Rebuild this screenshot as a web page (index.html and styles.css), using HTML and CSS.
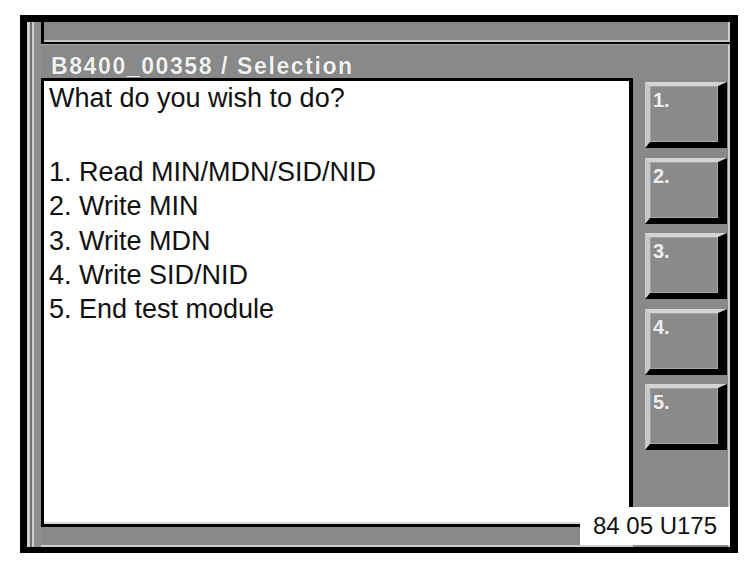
FILE: index.html
```html
<!DOCTYPE html>
<html>
<head>
<meta charset="utf-8">
<link rel="stylesheet" href="styles.css">
</head>
<body>
<div class="frame">
  <div class="rail"></div>
  <div class="main">
    <div class="topbar"></div>
    <div class="titlebar">B8400_00358 / Selection</div>
    <div class="body">
      <div class="left">
        <div class="content">
          <p class="question">What do you wish to do?</p>
          <ol class="options">
            <li>1. Read MIN/MDN/SID/NID</li>
            <li>2. Write MIN</li>
            <li>3. Write MDN</li>
            <li>4. Write SID/NID</li>
            <li>5. End test module</li>
          </ol>
        </div>
        <div class="band"></div>
      </div>
      <div class="side">
        <div class="btn">1.</div>
        <div class="btn">2.</div>
        <div class="btn">3.</div>
        <div class="btn">4.</div>
        <div class="btn">5.</div>
      </div>
    </div>
  </div>
  <div class="label">84 05 U175</div>
</div>
</body>
</html>
```
FILE: styles.css
```css
html, body {
  margin: 0;
  padding: 0;
  background: #fff;
}
body {
  font-family: "Liberation Sans", Arial, sans-serif;
}
.frame {
  position: relative;
  box-sizing: border-box;
  margin: 15px 0 0 20px;
  width: 718px;
  height: 538px;
  border-style: solid;
  border-color: #000;
  border-width: 7px 8px 6px 7px;
  background: #898989;
  display: flex;
}
.rail {
  width: 14px;
  flex: none;
  background: linear-gradient(to right,
    #cfcfcf 0, #cfcfcf 3px,
    #6f6f6f 3px, #6f6f6f 5px,
    #cfcfcf 5px, #cfcfcf 7px,
    #8f8f8f 7px, #8f8f8f 14px);
}
.main {
  flex: 1;
  display: flex;
  flex-direction: column;
}
.topbar {
  box-sizing: border-box;
  height: 22px;
  flex: none;
  background: #898989;
  border-left: 3px solid #000;
  border-bottom: 2px solid #000;
  box-shadow: inset 0 -2px 0 #c4c4c4, inset -2px 0 0 #cfcfcf;
}
.titlebar {
  box-sizing: border-box;
  height: 34px;
  flex: none;
  padding: 9px 0 0 10px;
  line-height: 24px;
  font-weight: bold;
  font-size: 23px;
  letter-spacing: 1.6px;
  color: #f2f2f2;
  text-shadow: 0 0 1px #555;
  border-top: 1px solid #a8a8a8;
  box-shadow: inset -2px 0 0 #cfcfcf;
  white-space: nowrap;
}
.body {
  flex: 1;
  display: flex;
}
.left {
  flex: 1;
  display: flex;
  flex-direction: column;
}
.content {
  box-sizing: border-box;
  height: 449px;
  background: #fff;
  border-style: solid;
  border-color: #000;
  border-width: 3px 4px 3px 3px;
  box-shadow: inset 0 -2px 0 #d8d8d8;
  padding: 0 0 0 5px;
  color: #111;
  font-size: 27px;
  line-height: 34.2px;
}
.question {
  margin: 0 0 40px 0;
}
.options {
  list-style: none;
  margin: 0;
  padding: 0;
}
.band {
  flex: 1;
  background: #898989;
  box-shadow: inset 0 -2px 0 #cfcfcf;
}
.side {
  box-sizing: border-box;
  width: 97px;
  flex: none;
  padding: 4px 0 0 12px;
  border-right: 2px solid #cfcfcf;
  display: flex;
  flex-direction: column;
  gap: 9.5px;
}
.btn {
  box-sizing: border-box;
  width: 82px;
  height: 66px;
  border-style: solid;
  border-width: 4px 9px 6px 5px;
  border-color: #d4d4d4 #000 #000 #c8c8c8;
  background: #8a8a8a;
  box-shadow: inset -1px -1px 0 #a8a8a8, inset 1px 1px 0 #a0a0a0;
  padding: 4px 0 0 3px;
  color: #eeeeee;
  font-weight: bold;
  font-size: 20px;
  line-height: 20px;
}
.label {
  position: absolute;
  left: 553px;
  top: 485px;
  width: 150px;
  height: 38px;
  background: #fff;
  color: #111;
  font-size: 24px;
  line-height: 38px;
  text-align: center;
  white-space: nowrap;
}
```
